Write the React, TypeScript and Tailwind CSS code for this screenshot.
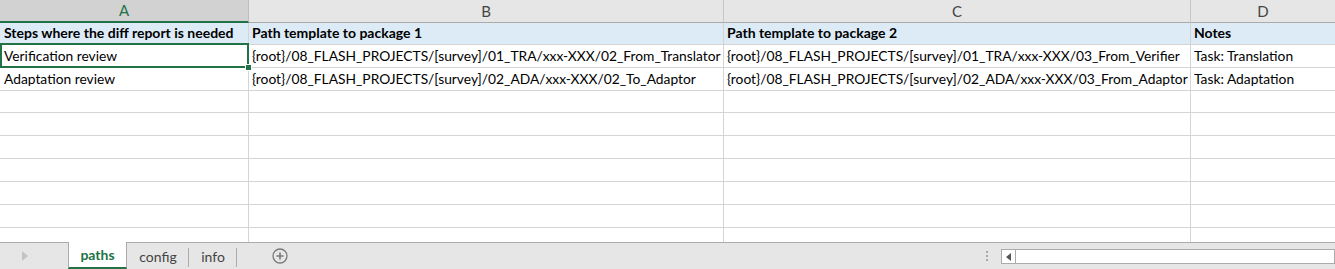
import React from "react";

const FONT = { fontFamily: 'Lato, "Open Sans", "Liberation Sans", sans-serif' };

const rowHeights = [22, 23, 23, 22, 23, 23, 23, 23, 23, 23];

const data: string[][] = [
  [
    "Steps where the diff report is needed",
    "Path template to package 1",
    "Path template to package 2",
    "Notes",
  ],
  [
    "Verification review",
    "{root}/08_FLASH_PROJECTS/[survey]/01_TRA/xxx-XXX/02_From_Translator",
    "{root}/08_FLASH_PROJECTS/[survey]/01_TRA/xxx-XXX/03_From_Verifier",
    "Task: Translation",
  ],
  [
    "Adaptation review",
    "{root}/08_FLASH_PROJECTS/[survey]/02_ADA/xxx-XXX/02_To_Adaptor",
    "{root}/08_FLASH_PROJECTS/[survey]/02_ADA/xxx-XXX/03_From_Adaptor",
    "Task: Adaptation",
  ],
];

const colClasses = [
  "w-[249px] border-r border-[#d4d4d4] pl-[4px]",
  "w-[475px] border-r border-[#d4d4d4] pl-[3px]",
  "w-[467px] border-r border-[#d4d4d4] pl-[3px]",
  "flex-1 pl-[3px]",
];

export default function App() {
  return (
    <div className="w-[1335px] h-[269px] overflow-hidden bg-white flex flex-col text-[13.8px] text-black" style={FONT}>
      {/* Grid */}
      <div className="h-[242px] overflow-hidden flex flex-col">
        {/* Column header */}
        <div className="flex h-[23px] shrink-0 bg-[#e6e6e6] text-[#444]">
          <div className="w-[249px] border-r border-[#bdbdbd] bg-[#d2d2d2] border-b-2 border-b-[#217346] text-[#217346] flex items-center justify-center text-[15px]">
            A
          </div>
          <div className="w-[475px] border-r border-[#c6c6c6] border-b border-b-[#ababab] flex items-center justify-center text-[15px]">
            B
          </div>
          <div className="w-[467px] border-r border-[#c6c6c6] border-b border-b-[#ababab] flex items-center justify-center text-[15px]">
            C
          </div>
          <div className="flex-1 border-b border-b-[#ababab] flex items-center justify-center text-[15px]">
            D
          </div>
        </div>
        {rowHeights.map((h, r) => {
          const row = data[r];
          return (
            <div
              key={r}
              className={`flex shrink-0 border-b border-[#d4d4d4] ${r === 0 ? "bg-[#ddebf7] font-bold text-[14px]" : "bg-white"}`}
              style={{ height: h }}
            >
              {colClasses.map((cc, c) => (
                <div
                  key={c}
                  className={`${cc} relative flex items-end pb-[3px] whitespace-nowrap leading-[16px]`}
                >
                  {row ? <span className="block overflow-hidden">{row[c]}</span> : null}
                  {r === 1 && c === 0 ? (
                    <>
                      <div className="absolute left-0 top-[-2px] right-[-1px] bottom-[-1px] border-2 border-[#217346] pointer-events-none z-10" />
                      <div className="absolute right-[-4px] bottom-[-4px] w-[7px] h-[7px] bg-[#217346] border border-white z-20" />
                    </>
                  ) : null}
                </div>
              ))}
            </div>
          );
        })}
      </div>

      {/* Sheet tabs bar */}
      <div className="h-[27px] shrink-0 bg-[#e6e6e6] border-t border-[#ababab] flex items-stretch relative">
        <div className="w-[68px] flex items-center pl-[22px]">
          <svg width="6" height="10" viewBox="0 0 6 10">
            <path d="M0 0 L6 5 L0 10 Z" fill="#c4c4c4" />
          </svg>
        </div>
        <div className="w-[59px] -mt-px bg-white border-l border-r border-[#ababab] border-b-2 border-b-[#217346] flex items-center justify-center font-bold text-[#217346] text-[14px]">
          paths
        </div>
        <div className="w-[62px] flex items-center justify-center text-[#444] text-[14px] relative">
          config
          <div className="absolute right-0 top-[5px] h-[19px] w-px bg-[#ababab]" />
        </div>
        <div className="w-[48px] flex items-center justify-center text-[#444] text-[14px] relative">
          info
          <div className="absolute right-0 top-[5px] h-[19px] w-px bg-[#ababab]" />
        </div>
        <div className="w-[84px] flex items-center justify-center pl-[1px]">
          <svg width="16" height="16" viewBox="0 0 16 16">
            <circle cx="8" cy="8" r="7" fill="none" stroke="#7a7a7a" strokeWidth="1.3" />
            <path d="M8 4.5 V11.5 M4.5 8 H11.5" stroke="#7a7a7a" strokeWidth="1.6" />
          </svg>
        </div>
        <div className="flex-1" />
        <div className="flex items-center pr-[13px]">
          <div className="flex flex-col gap-[2px]">
            <div className="w-[2px] h-[2px] bg-[#a8a8a8]" />
            <div className="w-[2px] h-[2px] bg-[#a8a8a8]" />
            <div className="w-[2px] h-[2px] bg-[#a8a8a8]" />
          </div>
        </div>
        <div className="w-[334px] flex items-start pt-[6px]">
          <div className="flex-1 h-[15px] bg-white border border-[#ababab] flex">
            <div className="w-[14px] border-r border-[#ababab] flex items-center justify-center">
              <svg width="5" height="8" viewBox="0 0 5 8">
                <path d="M5 0 L0 4 L5 8 Z" fill="#555" />
              </svg>
            </div>
          </div>
        </div>
      </div>
    </div>
  );
}
